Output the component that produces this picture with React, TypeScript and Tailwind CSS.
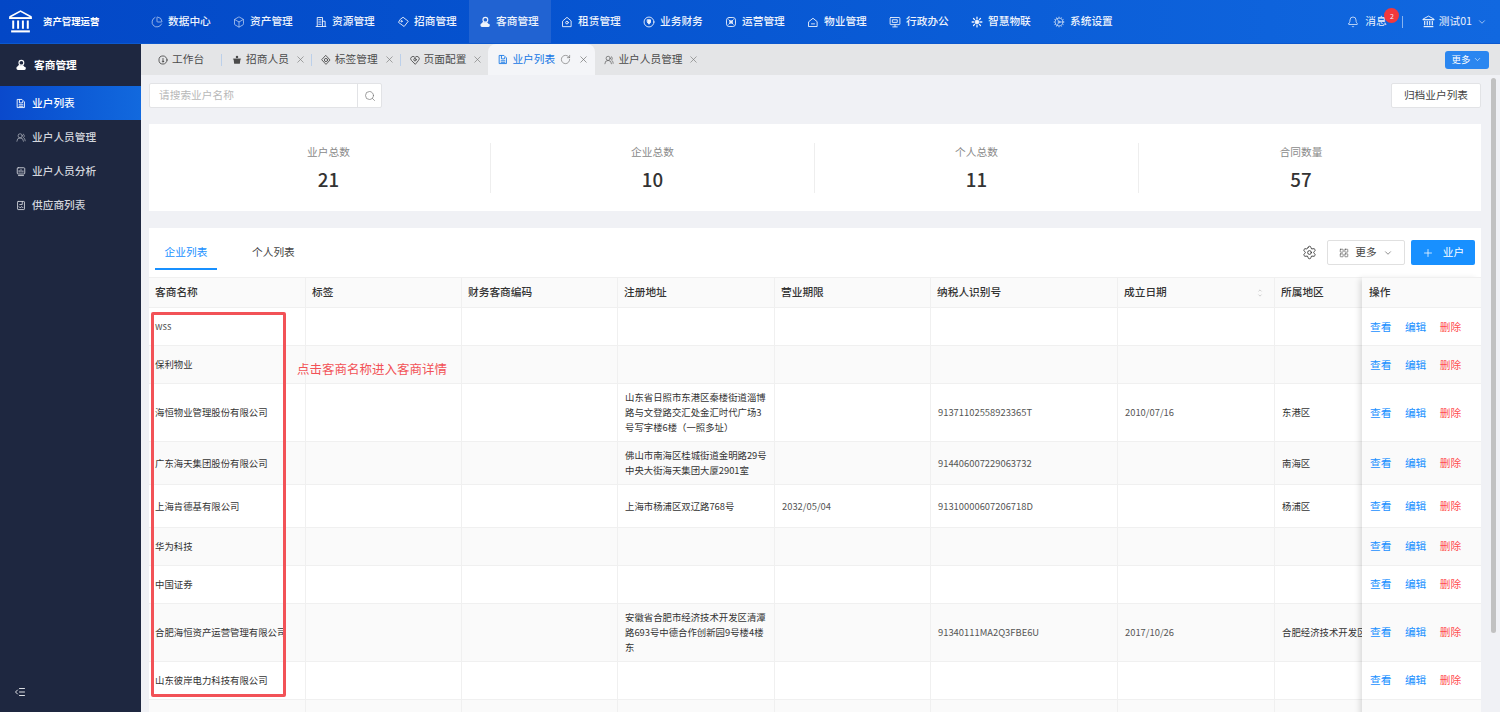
import React from "react";
import {
  Bell, Box, ChartPie, ChevronDown, ChevronUp, IndentDecrease, LayoutGrid, Plus, RotateCw, Search, Settings, UsersRound, X, Cog,
} from "lucide-react";

const font = "[font-family:'Noto_Sans_CJK_SC','Liberation_Sans',sans-serif]";

type IconProps = { className?: string; strokeWidth?: number };

function Svg({ className = "", strokeWidth = 1.3, children }: IconProps & { children: React.ReactNode }) {
  return (
    <svg viewBox="0 0 16 16" className={className} fill="none" stroke="currentColor" strokeWidth={strokeWidth} strokeLinejoin="round" strokeLinecap="round">
      {children}
    </svg>
  );
}

function UserCloud({ className = "" }: IconProps) {
  return (
    <svg viewBox="0 0 16 16" className={className} fill="currentColor">
      <circle cx="8.5" cy="5" r="3.2" fill="none" stroke="currentColor" strokeWidth="1.5" />
      <path d="M4 14.5a2.4 2.4 0 0 1-.4-4.7A3 3 0 0 1 8 8.6a3 3 0 0 1 2.4-.3c1.3.4 1.9 1.3 2 2.2a2 2 0 0 1 .1 4z" />
    </svg>
  );
}

function BankLogo({ className = "" }: IconProps) {
  return (
    <svg viewBox="0 0 24 24" className={className} fill="none" stroke="#fff" strokeWidth="1.6">
      <path d="M2 7.5 12 2l10 5.5v1.2H2z" />
      <path d="M5 11v8M9.7 11v8M14.3 11v8M19 11v8" strokeWidth="1.9" />
      <path d="M3 21.5h18" strokeWidth="2" />
      <path d="M1 8.7h22" strokeWidth="1.2" />
    </svg>
  );
}

const BuildingIcon = (p: IconProps) => <Svg {...p}><path d="M3 14V2h7v12M10 7h3.5v7M1.5 14h13M5 5h3M5 8h3M5 11h3" /></Svg>;
const DiamondTag = (p: IconProps) => <Svg {...p}><path d="M8.5 2 15 7l-5.5 7L2 8.5 4 5z" /><circle cx="6" cy="7" r=".9" /></Svg>;
const HouseDot = (p: IconProps) => <Svg {...p}><path d="M2.5 6.5 8 1.8l5.5 4.7v7.7h-11z" /><circle cx="8" cy="8.8" r="1.8" /></Svg>;
const CoinIcon = (p: IconProps) => <Svg {...p}><circle cx="8" cy="8" r="6.6" /><path d="M6 5h4v3.5L8 11 6 8.5z" fill="currentColor" /></Svg>;
const OpsIcon = (p: IconProps) => <Svg {...p}><rect x="2" y="2" width="12" height="12" rx="3.5" /><path d="m5 5 6 6M11 5l-6 6" /><circle cx="8" cy="8" r="1.8" /></Svg>;
const HouseLow = (p: IconProps) => <Svg {...p}><path d="M2.5 7.5 8 3l5.5 4.5V14h-11z" /><path d="M6 10.5h4" /></Svg>;
const MonitorBox = (p: IconProps) => <Svg {...p}><rect x="1.5" y="2" width="13" height="9.5" rx="1" /><rect x="5" y="5" width="6" height="3.5" /><path d="M8 11.5V14M5 14.5h6" /></Svg>;
const ChipFlower = (p: IconProps) => <Svg {...p}><circle cx="8" cy="8" r="2.6" fill="currentColor" /><path d="M8 1.5v2M8 12.5v2M1.5 8h2M12.5 8h2M3.4 3.4l1.4 1.4M11.2 11.2l1.4 1.4M12.6 3.4l-1.4 1.4M4.8 11.2l-1.4 1.4" strokeWidth="1.7" /></Svg>;
const Doc = (p: IconProps) => <Svg {...p}><path d="M2.5 1.5h7l4 4v9h-11z" /><path d="M5.5 2v5h5V5M5 10h6M5 12.5h6" /></Svg>;
const GaugeRound = (p: IconProps) => <Svg {...p}><circle cx="8" cy="8" r="6.5" /><path d="M8 10V5.5" /><circle cx="8" cy="10.5" r="1" /></Svg>;
const Basket = (p: IconProps) => <svg viewBox="0 0 16 16" className={p.className} fill="currentColor"><circle cx="8" cy="3.3" r="2" /><path d="M2.5 6h11l-1 8h-9z" /><path d="M1.5 6.5h13" stroke="currentColor" /></svg>;
const DiamondRing = (p: IconProps) => <Svg {...p}><path d="M8 1 14.5 8 8 15 1.5 8z" /><circle cx="8" cy="8" r="2.6" /></Svg>;
const HeartRing = (p: IconProps) => <Svg {...p}><path d="M8 14.5 2.2 8.6a3.6 3.6 0 0 1 0-5.2 3.8 3.8 0 0 1 5.3 0L8 4l.5-.6a3.8 3.8 0 0 1 5.3 0 3.6 3.6 0 0 1 0 5.2z" /><circle cx="8" cy="7.5" r="2" /></Svg>;
const ScreenIcon = (p: IconProps) => <Svg {...p}><rect x="2" y="2" width="12" height="10" rx="1.5" /><path d="M5 9V6.5M8 9V5M11 9V7M4 14.5h8" /></Svg>;
const ReportIcon = (p: IconProps) => <Svg {...p}><rect x="2.5" y="1.5" width="11" height="13" rx="1" /><path d="M10 1.5v5H6M5 10l2 2 2-2.5 2 2" /></Svg>;

const nav: [(p: IconProps) => React.ReactNode, string][] = [
  [ChartPie as any, "数据中心"], [Box as any, "资产管理"], [BuildingIcon, "资源管理"], [DiamondTag, "招商管理"], [UserCloud, "客商管理"],
  [HouseDot, "租赁管理"], [CoinIcon, "业务财务"], [OpsIcon, "运营管理"], [HouseLow, "物业管理"], [MonitorBox, "行政办公"],
  [ChipFlower, "智慧物联"], [Cog as any, "系统设置"],
];

const side: [(p: IconProps) => React.ReactNode, string][] = [
  [Doc, "业户列表"], [UsersRound as any, "业户人员管理"], [ScreenIcon, "业户人员分析"], [ReportIcon, "供应商列表"],
];

const tabs: [(p: IconProps) => React.ReactNode, string, boolean][] = [
  [GaugeRound, "工作台", false], [Basket, "招商人员", true], [DiamondRing, "标签管理", true], [HeartRing, "页面配置", true],
];

const cols: [string, number][] = [
  ["客商名称", 157], ["标签", 156], ["财务客商编码", 156], ["注册地址", 157], ["营业期限", 156], ["纳税人识别号", 187], ["成立日期", 157], ["所属地区", 120],
];

type Row = { h: number; name: string; addr?: string[]; term?: string; tax?: string; date?: string; area?: string };
const rows: Row[] = [
  { h: 38, name: "wss" },
  { h: 38, name: "保利物业" },
  { h: 58, name: "海恒物业管理股份有限公司", addr: ["山东省日照市东港区秦楼街道淄博", "路与文登路交汇处金汇时代广场3", "号写字楼6楼（一照多址）"], tax: "91371102558923365T", date: "2010/07/16", area: "东港区" },
  { h: 43, name: "广东海天集团股份有限公司", addr: ["佛山市南海区桂城街道金明路29号", "中央大街海天集团大厦2901室"], tax: "914406007229063732", area: "南海区" },
  { h: 43, name: "上海肯德基有限公司", addr: ["上海市杨浦区双辽路768号"], term: "2032/05/04", tax: "91310000607206718D", area: "杨浦区" },
  { h: 38, name: "华为科技" },
  { h: 38, name: "中国证券" },
  { h: 58, name: "合肥海恒资产运营管理有限公司", addr: ["安徽省合肥市经济技术开发区清潭", "路693号中德合作创新园9号楼4楼", "东"], tax: "91340111MA2Q3FBE6U", date: "2017/10/26", area: "合肥经济技术开发区" },
  { h: 38, name: "山东彼岸电力科技有限公司" },
];

function Cell({ w, children, last }: { w: number; children?: React.ReactNode; last?: boolean }) {
  return (
    <div style={{ width: w }} className={`shrink-0 h-full flex items-center pl-[7px] pr-[6px] whitespace-nowrap overflow-hidden ${last ? "" : "border-r border-[#f0f0f0]"}`}>
      {children}
    </div>
  );
}

export default function App() {
  return (
    <div className={`${font} w-[1500px] h-[712px] overflow-hidden flex flex-col bg-[#f0f1f5] text-[#333]`}>
      <header className="h-[44px] shrink-0 flex items-stretch border-b border-[#0b58cf] bg-gradient-to-r from-[#0347c6] to-[#1168e0] text-[#eef3fc]">
        <div className="w-[141px] shrink-0 flex items-center pl-[8px] gap-[10px] text-white">
          <BankLogo className="w-[25px] h-[25px]" />
          <span className="text-[9.4px] font-bold">资产管理运营</span>
        </div>
        <nav className="flex">
          {nav.map(([I, t], i) => (
            <div key={i} className={`w-[82px] flex items-center pl-[10px] gap-[5px] text-[10.7px] font-medium ${i === 4 ? "bg-[#2163d2]" : ""}`}>
              <I className="w-[12px] h-[12px] shrink-0" strokeWidth={1.2} />
              <span className="whitespace-nowrap">{t}</span>
            </div>
          ))}
        </nav>
        <div className="flex-1 flex items-center justify-end text-[10.7px] pr-[13px]">
          <Bell className="w-[12px] h-[12px] mr-[6px]" strokeWidth={1.5} />
          <span className="relative">
            消息
            <span className="absolute left-[19px] -top-[5px] w-[15px] h-[15px] rounded-full bg-[#f2383c] text-[7px] flex items-center justify-center">2</span>
          </span>
          <span className="w-px h-[12px] bg-white/50 ml-[15px] mr-[19px]" />
          <BankLogo className="w-[13px] h-[13px] mr-[4px]" />
          <span>测试01</span>
          <ChevronDown className="w-[10px] h-[10px] ml-[5px]" strokeWidth={1.5} />
        </div>
      </header>

      <div className="flex-1 flex min-h-0">
        <aside className="w-[141px] shrink-0 bg-[#1e2740] flex flex-col text-[#d3d6dd] text-[10.7px]">
          <div className="h-[42px] flex items-center pl-[15px] gap-[7px] text-white font-bold">
            <UserCloud className="w-[12px] h-[12px]" />
            <span>客商管理</span>
          </div>
          {side.map(([I, t], i) => (
            <div key={t} className={`h-[34px] flex items-center pl-[16px] gap-[6px] font-medium ${i === 0 ? "text-white bg-gradient-to-r from-[#0a49cc] to-[#1269de]" : ""}`}>
              <I className="w-[10px] h-[11px] shrink-0" strokeWidth={1.4} />
              <span>{t}</span>
            </div>
          ))}
          <div className="flex-1" />
          <div className="h-[40px] flex items-center pl-[14px]">
            <IndentDecrease className="w-[12px] h-[12px] text-white" strokeWidth={1.7} />
          </div>
        </aside>

        <main className="flex-1 min-w-0 flex flex-col">
          <div className="h-[31px] shrink-0 bg-[#e4e5e7] flex items-end pl-[17px] pr-[11px] text-[10.7px] text-[#4b4b4b]">
            {tabs.map(([I, t, c], i) => (
              <div key={t} className="h-full flex items-center">
                <I className="w-[10px] h-[10px] mr-[4px]" strokeWidth={1.4} />
                <span>{t}</span>
                {c && <X className="w-[11px] h-[11px] ml-[6px] text-[#777]" strokeWidth={1.4} />}
                {i < 3 && <span className={`w-px h-[12px] bg-[#bcd0ea] ${i === 0 ? "ml-[17px] mr-[10px]" : "ml-[5px] mr-[9px]"}`} />}
              </div>
            ))}
            <div className="h-full ml-[5px] w-[107px] shrink-0 rounded-t-[8px] bg-[#f4f5f8] flex items-center pl-[10px] text-[#1677e5]">
              <Doc className="w-[10px] h-[11px] mr-[4px]" strokeWidth={1.4} />
              <span>业户列表</span>
              <RotateCw className="w-[11px] h-[11px] ml-[5px] text-[#666]" strokeWidth={1.3} />
              <X className="w-[11px] h-[11px] ml-[7px] text-[#666]" strokeWidth={1.4} />
            </div>
            <div className="h-full flex items-center ml-[9px]">
              <UsersRound className="w-[10px] h-[10px] mr-[4px]" strokeWidth={1.5} />
              <span>业户人员管理</span>
              <X className="w-[11px] h-[11px] ml-[5px] text-[#777]" strokeWidth={1.4} />
            </div>
            <div className="flex-1" />
            <div className="self-center w-[44px] h-[18px] rounded-[3px] bg-[#2a86f0] text-white text-[9.4px] flex items-center justify-center gap-[3px]">
              更多 <ChevronDown className="w-[9px] h-[9px]" strokeWidth={1.5} />
            </div>
          </div>

          <div className="flex-1 min-h-0 flex">
            <div className="w-[1340px] shrink-0 pl-[8px] flex flex-col overflow-hidden">
              <div className="h-[25px] mt-[8px] shrink-0 flex justify-between">
                <div className="w-[233px] flex bg-white border border-[#e2e3e6] rounded-[2px] text-[10.7px] text-[#b8b8b8]">
                  <div className="flex-1 flex items-center pl-[9px]">请搜索业户名称</div>
                  <div className="w-[24px] border-l border-[#e2e3e6] flex items-center justify-center">
                    <Search className="w-[12px] h-[12px] text-[#777]" strokeWidth={1.4} />
                  </div>
                </div>
                <div className="w-[90px] bg-white border border-[#e2e3e6] rounded-[2px] flex items-center justify-center text-[10.7px] text-[#444]">归档业户列表</div>
              </div>

              <div className="h-[87px] mt-[16px] shrink-0 bg-white px-[18px] grid grid-cols-4 items-center">
                {[["业户总数", "21"], ["企业总数", "10"], ["个人总数", "11"], ["合同数量", "57"]].map(([a, b], i) => (
                  <div key={a} className={`h-[50px] flex flex-col items-center justify-center ${i < 3 ? "border-r border-[#eeeeee]" : ""}`}>
                    <span className="text-[10.7px] text-[#8a8a8a] leading-[16px]">{a}</span>
                    <span className="text-[18.7px] font-medium text-[#333] leading-[26px] mt-[6px]">{b}</span>
                  </div>
                ))}
              </div>

              <div className="mt-[17px] flex-1 min-h-0 bg-white relative overflow-hidden">
                <div className="h-[49px] flex items-center relative">
                  <div className="ml-[6px] w-[62px] h-full flex items-center justify-center text-[10.7px] text-[#1890ff] relative">
                    企业列表
                    <span className="absolute left-0 right-0 bottom-[7px] h-[2px] bg-[#1890ff]" />
                  </div>
                  <div className="ml-[35px] text-[10.7px] text-[#444]">个人列表</div>
                  <div className="flex-1" />
                  <Settings className="w-[15px] h-[15px] text-[#333] mr-[10px]" strokeWidth={1.4} />
                  <div className="w-[78px] h-[25px] border border-[#e0e0e0] rounded-[2px] flex items-center justify-center gap-[6px] text-[10.7px] text-[#444]">
                    <LayoutGrid className="w-[10px] h-[10px]" strokeWidth={1.4} />
                    更多
                    <ChevronDown className="w-[10px] h-[10px]" strokeWidth={1.4} />
                  </div>
                  <div className="ml-[6px] mr-[6px] w-[64px] h-[25px] rounded-[2px] bg-[#1890ff] text-white flex items-center justify-center gap-[9px] text-[10.7px]">
                    <Plus className="w-[12px] h-[12px]" strokeWidth={1.5} />
                    业户
                  </div>
                </div>

                <div className="flex">
                  <div className="w-[1213px] shrink-0 overflow-hidden">
                    <div className="h-[31px] w-[1300px] flex bg-[#fafafa] border-y border-[#f0f0f0] text-[10.7px] text-[#333] font-medium">
                      {cols.map(([t, w]) => (
                        <div key={t} style={{ width: w }} className="shrink-0 h-full flex items-center justify-between pl-[6px] pr-[10px] border-r border-[#f0f0f0]">
                          <span>{t}</span>
                          {t === "成立日期" && (
                            <span className="flex flex-col text-[#b5b5b5]">
                              <ChevronUp className="w-[8px] h-[5px]" strokeWidth={3} />
                              <ChevronDown className="w-[8px] h-[5px]" strokeWidth={3} />
                            </span>
                          )}
                        </div>
                      ))}
                    </div>
                    {rows.map((r, i) => (
                      <div key={i} style={{ height: r.h }} className={`w-[1300px] flex text-[9.4px] border-b border-[#f0f0f0] ${i % 2 ? "bg-[#fafafa]" : "bg-white"}`}>
                        <div style={{ width: 157 }} className={`shrink-0 h-full flex items-center pl-[6px] whitespace-nowrap overflow-hidden border-r border-[#f0f0f0] text-[#333] ${r.name === "wss" ? "text-[#555]" : ""}`}>{r.name}</div>
                        <Cell w={156} />
                        <Cell w={156} />
                        <Cell w={157}>
                          {r.addr && <div className="leading-[15px] text-[#333]">{r.addr.map((l) => <div key={l}>{l}</div>)}</div>}
                        </Cell>
                        <Cell w={156}><span className="text-[#555]">{r.term}</span></Cell>
                        <Cell w={187}><span className="text-[#555]">{r.tax}</span></Cell>
                        <Cell w={157}><span className="text-[#555]">{r.date}</span></Cell>
                        <Cell w={120} last><span className="text-[#333]">{r.area}</span></Cell>
                      </div>
                    ))}
                    <div className="h-[38px] w-[1300px] flex bg-[#fafafa]">
                      <Cell w={157} /><Cell w={156} /><Cell w={156} /><Cell w={157} /><Cell w={156} /><Cell w={187} /><Cell w={157} /><Cell w={120} last />
                    </div>
                  </div>
                  <div className="w-[119px] shrink-0 shadow-[-4px_0_6px_-2px_rgba(0,0,0,0.14)] z-10">
                    <div className="h-[31px] flex items-center pl-[7px] bg-[#fafafa] border-y border-[#f0f0f0] text-[10.7px] text-[#333] font-medium">操作</div>
                    {rows.map((r, i) => (
                      <div key={i} style={{ height: r.h }} className={`flex items-center pl-[8px] gap-[13.5px] text-[10.7px] border-b border-[#f0f0f0] ${i < 5 && i !== 3 ? "pt-[1px]" : ""} ${i % 2 ? "bg-[#fafafa]" : "bg-white"}`}>
                        <span className="text-[#1890ff]">查看</span>
                        <span className="text-[#1890ff]">编辑</span>
                        <span className="text-[#ff4d4f]">删除</span>
                      </div>
                    ))}
                    <div className="h-[38px] bg-[#fafafa]" />
                  </div>
                </div>

                <div className="absolute left-[2px] top-[84px] w-[135px] h-[385px] border-[3px] border-[#f25257] rounded-[2px]" />
                <div className="absolute left-[148px] top-[132px] text-[12.5px] text-[#f25257] whitespace-nowrap">点击客商名称进入客商详情</div>
              </div>
            </div>

            <div className="flex-1 pl-[10px] pt-[3px]">
              <div className="w-[5px] h-[555px] rounded-full bg-[#c1c1c1]" />
            </div>
          </div>
        </main>
      </div>
    </div>
  );
}
